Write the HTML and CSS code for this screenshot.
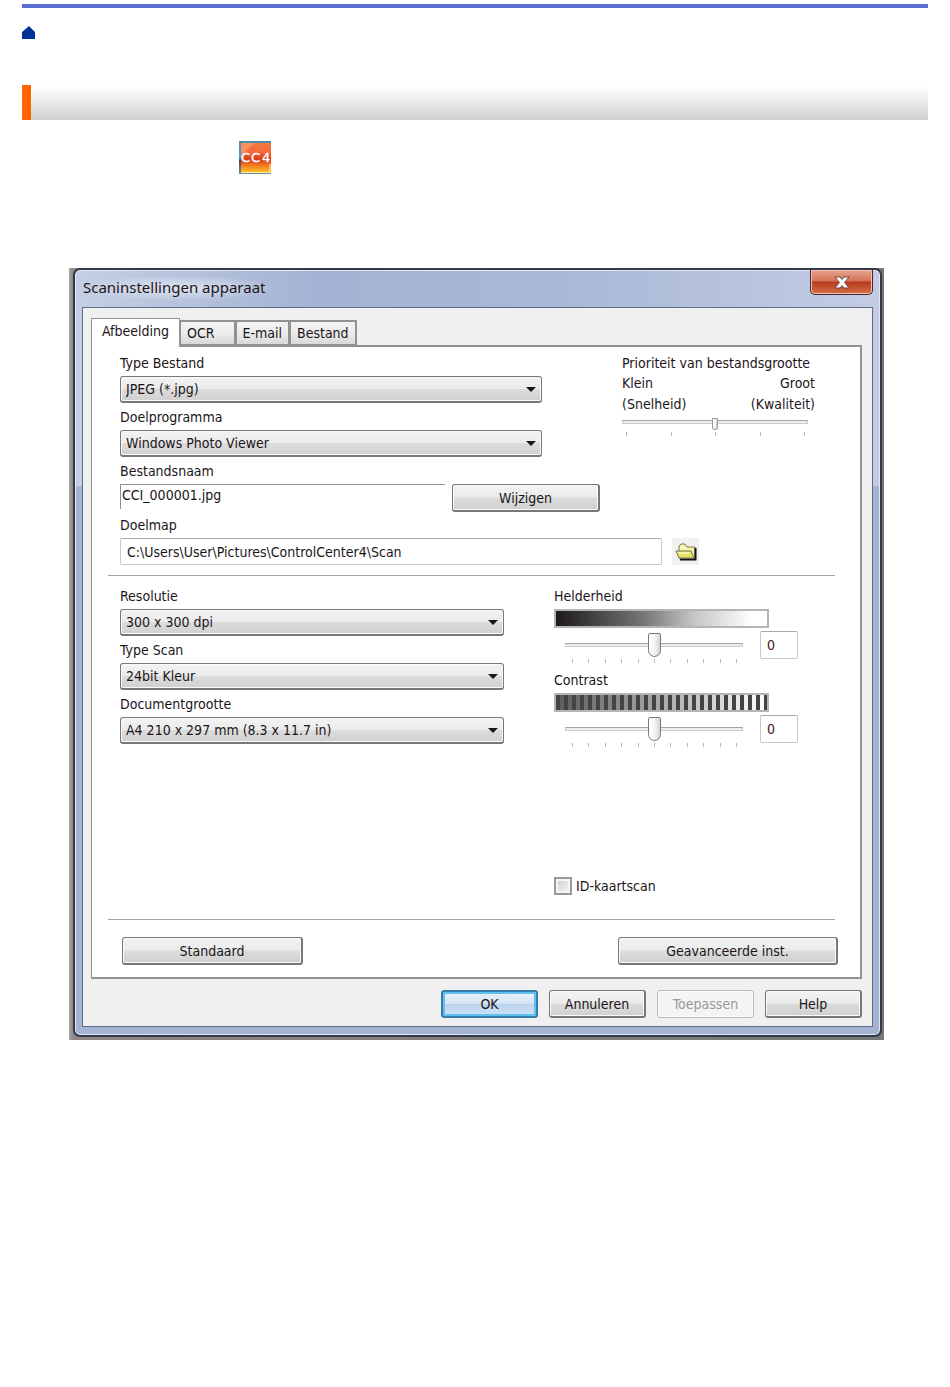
FILE: index.html
```html
<!DOCTYPE html>
<html lang="nl">
<head>
<meta charset="utf-8">
<title>Scaninstellingen apparaat</title>
<link rel="stylesheet" href="styles.css">
</head>
<body>
<header class="page-head">
  <a class="home" href="#" aria-label="Home"><svg width="13" height="13" viewBox="0 0 13 13"><path d="M0 13V6L6 1L7 0L13 6V13Z" fill="#003399"/></svg></a>
  <div class="heading-bar"></div>
</header>
<main>
  <svg class="cc4" width="32" height="33" viewBox="0 0 32 33" role="img" aria-label="CC4">
    <defs>
      <linearGradient id="fire" x1="0" y1="0" x2="0" y2="1"><stop offset="0" stop-color="#f07843"/><stop offset=".3" stop-color="#f8693c"/><stop offset=".55" stop-color="#d8371c"/><stop offset=".75" stop-color="#f47a20"/><stop offset="1" stop-color="#ffc928"/></linearGradient>
      <linearGradient id="edge" x1="0" y1="0" x2="0" y2="1"><stop offset="0" stop-color="#5288a2"/><stop offset=".5" stop-color="#38a5d8"/><stop offset=".6" stop-color="#52424a"/><stop offset="1" stop-color="#5e9ab0"/></linearGradient>
    </defs>
    <rect width="32" height="33" fill="url(#edge)"/>
    <rect x="2" y="2" width="30" height="30" fill="url(#fire)"/>
    <path d="M2 2H16Q6 9 2 18Z" fill="#ffa477" opacity=".6"/>
    <path d="M2 31.500H31V23" fill="none" stroke="#ffe7a0"/>
    <text x="2" y="21" class="cc4-text">C</text><text x="12" y="21" class="cc4-text">C</text><text x="23" y="21" class="cc4-text">4</text>
  </svg>

  <section class="frame" aria-labelledby="dlg-title">
    <div class="window">
      <div class="titlebar">
        <h1 id="dlg-title">Scaninstellingen apparaat</h1>
        <button class="close" type="button" aria-label="Sluiten"><svg width="16" height="13" viewBox="0 0 16 13"><path d="M1 1H6L8 3.500L10 1H15L10.500 6.500L15 12H10L8 9.500L6 12H1L5.500 6.500Z" fill="#fff" stroke="#6b4a4a"/></svg></button>
      </div>
      <form class="client">
        <div class="tabs" role="tablist">
          <button class="tab active" type="button" role="tab" aria-selected="true">Afbeelding</button>
          <button class="tab ocr" type="button" role="tab">OCR</button>
          <button class="tab" type="button" role="tab">E-mail</button>
          <button class="tab" type="button" role="tab">Bestand</button>
        </div>
        <div class="sheet">
          <div class="output">
            <div class="upper">
              <div class="stack wide">
                <div class="field"><label for="type">Type Bestand</label><div class="combo"><select id="type"><option>JPEG (*.jpg)</option></select></div></div>
                <div class="field"><label for="prog">Doelprogramma</label><div class="combo"><select id="prog"><option>Windows Photo Viewer</option></select></div></div>
              </div>
              <div class="priority">
                <label for="prio">Prioriteit van bestandsgrootte</label>
                <div class="ends"><span>Klein</span><span>Groot</span></div>
                <div class="ends"><span>(Snelheid)</span><span>(Kwaliteit)</span></div>
                <input class="range small" id="prio" type="range" min="0" max="4" value="2">
                <div class="ticks"><i></i><i></i><i></i><i></i><i></i></div>
              </div>
            </div>
            <div class="field name-field"><label for="name">Bestandsnaam</label>
              <div class="name-row"><input id="name" class="flat" type="text" value="CCI_000001.jpg" readonly><button class="btn" type="button">Wijzigen</button></div>
            </div>
            <div class="field"><label for="map">Doelmap</label>
              <div class="map-row"><input id="map" class="box" type="text" value="C:\Users\User\Pictures\ControlCenter4\Scan">
                <button class="browse" type="button" aria-label="Bladeren"><svg width="22" height="18" viewBox="0 0 22 18"><path d="M4 15V3L6 1H10L12 4H20V16H5Z" fill="#f4f3a0" stroke="#77776a"/><path d="M20.500 5V16.500H5" fill="none" stroke="#111" stroke-width="2"/><path d="M1 8H16L19 15H4Z" fill="#e6e45a" stroke="#77776a"/><path d="M5 5H11M3 10H15" stroke="#fff"/></svg></button></div>
            </div>
          </div>
          <hr>
          <div class="scan">
            <div class="stack">
              <div class="field"><label for="res">Resolutie</label><div class="combo"><select id="res"><option>300 x 300 dpi</option></select></div></div>
              <div class="field"><label for="scan">Type Scan</label><div class="combo"><select id="scan"><option>24bit Kleur</option></select></div></div>
              <div class="field"><label for="size">Documentgrootte</label><div class="combo"><select id="size"><option>A4 210 x 297 mm (8.3 x 11.7 in)</option></select></div></div>
            </div>
            <div class="adjust">
              <div class="level">
                <label for="bright">Helderheid</label>
                <div class="swatch brightness"></div>
                <div class="level-row"><div class="slider"><input class="range" id="bright" type="range" min="-50" max="50" value="0"><div class="ticks"><i></i><i></i><i></i><i></i><i></i><i></i><i></i><i></i><i></i><i></i><i></i></div></div><input class="box number" type="text" value="0" aria-label="Helderheid waarde"></div>
              </div>
              <div class="level">
                <label for="contrast">Contrast</label>
                <div class="swatch stripes"></div>
                <div class="level-row"><div class="slider"><input class="range" id="contrast" type="range" min="-50" max="50" value="0"><div class="ticks"><i></i><i></i><i></i><i></i><i></i><i></i><i></i><i></i><i></i><i></i><i></i></div></div><input class="box number" type="text" value="0" aria-label="Contrast waarde"></div>
              </div>
              <label class="check"><input type="checkbox">ID-kaartscan</label>
            </div>
          </div>
          <hr>
          <div class="sheet-actions"><button class="btn std" type="button">Standaard</button><button class="btn adv" type="button">Geavanceerde inst.</button></div>
        </div>
        <div class="actions">
          <button class="btn default" type="button">OK</button><button class="btn" type="button">Annuleren</button><button class="btn" type="button" disabled>Toepassen</button><button class="btn" type="button">Help</button>
        </div>
      </form>
    </div>
  </section>
</main>
</body>
</html>
```
FILE: styles.css
```css
* { box-sizing: border-box; }
body { margin: 0; background: #fff; color: #1c1518; font: 14px/20px "DejaVu Sans Condensed", "Noto Sans", sans-serif; }
button, input, select { font: inherit; color: inherit; margin: 0; }
.page-head { margin: 4px 22px 0; border-top: 4px solid #5a6fd6; padding-top: 18px; }
.home { display: block; height: 13px; }
.home svg { display: block; }
.heading-bar { height: 35px; margin-top: 46px; border-left: 9px solid #ff6600; background: linear-gradient(#fff, #f0f0f0 35%, #cfcfcf); }
main { padding: 21px 66px 0 69px; }
.cc4 { display: block; margin-left: 170px; }
.cc4-text { font: 13px "DejaVu Sans", sans-serif; fill: #fff; stroke: #fff; stroke-width: .4px; }

.frame { margin-top: 94px; padding: 0 2px 3px 4px; background: linear-gradient(90deg, #aaa, #8b8785 4px, #777); }
.window { border: 2px solid #343a48; border-radius: 7px; padding: 0 7px 8px; background: linear-gradient(90deg, #c5cfe4, #a3b3d3 30%, #a9b8d6 60%, #c3cce4) top / 100% 216px no-repeat, #a5b4d3; box-shadow: inset 0 0 0 1px #dfe7f5; }
.titlebar { display: flex; justify-content: space-between; align-items: flex-start; height: 37px; }
.titlebar h1 { margin: 5px 0 0; padding: 1px 12px 3px 1px; border-radius: 12px; background: radial-gradient(closest-side, #e8edf6cc, #e8edf600); font: 15px/22px "Noto Sans", sans-serif; }
.close { display: flex; align-items: center; justify-content: center; width: 63px; height: 25px; padding: 0; border: 1px solid #4a2530; border-top: 0; border-radius: 0 0 5px 5px; background: linear-gradient(#e5a58f, #d57258 45%, #b83a1c 50%, #d46f46); box-shadow: inset 0 0 0 1px #f3c4b5; }
.client { padding: 10px 10px 8px 8px; border: 1px solid #5f6d8b; background: #f0f0f0; }

.tabs { display: flex; align-items: flex-end; height: 27px; }
.tab { height: 25px; padding: 0 6px; border: 2px solid #929292; border-left-width: 1px; border-bottom-width: 1px; background: linear-gradient(#f3f3f3, #ececec 50%, #d9d9d9); white-space: nowrap; }
.tab.ocr { padding-right: 19px; }
.tab.active { position: relative; height: 29px; margin-bottom: -2px; padding: 0 10px 4px; border-width: 1px 1px 0; background: #fff; }
.sheet { padding: 6px 25px 12px 16px; border: 2px solid #929292; border-left-width: 1px; background: #fff; }
label { display: block; height: 20px; white-space: nowrap; }
.output { padding-left: 12px; }
.upper { display: flex; gap: 10%; justify-content: space-between; }
.stack { display: flex; flex-direction: column; gap: 4px; }
.wide { flex: 0 1 422px; }
.field { display: flex; flex-direction: column; gap: 3px; }
.name-field { margin: 4px 0 3px; }
.combo { position: relative; }
.combo::after { content: ""; position: absolute; right: 6px; top: 11px; border: 5px solid transparent; border-top-color: #181818; border-bottom: 0; pointer-events: none; }
.combo select, .btn { height: 27px; border: 1px solid #777; border-radius: 3px; background: linear-gradient(#f3f3f3, #ebebeb 48%, #dcdcdc 52%, #d0d0d0); box-shadow: inset 0 0 0 1px #fafafa; }
.combo select { display: block; width: 100%; padding: 0 24px 0 5px; appearance: none; border-bottom-width: 2px; }
.btn { width: 97px; height: 28px; padding: 0; border-width: 1px 2px 2px 1px; flex: none; text-align: center; }
.priority { flex: 0 0 193px; margin-right: 20px; }
.ends { display: flex; justify-content: space-between; height: 21px; }
.priority .range { width: 186px; }
.priority .ticks { width: 186px; padding: 4px 3px 0 4px; }
.name-row { display: flex; gap: 7px; }
.flat { flex: 0 1 325px; min-width: 0; height: 25px; padding: 0 0 4px 1px; border: solid #909090; border-width: 1px 0 0 1px; background: #fff; }
.name-row .btn { width: 148px; }
.map-row { display: flex; gap: 10px; }
.box { flex: 0 1 542px; min-width: 0; height: 27px; padding: 0 6px; border: 1px solid #c9c9c9; border-top-color: #aaa; border-radius: 2px; background: #fff; }
.browse { display: flex; align-items: center; justify-content: center; width: 27px; height: 27px; padding: 0; border: 0; background: #f1f1f1; }
hr { height: 1px; margin: 10px 0; border: 0; background: #a2a2a2; }

.scan { display: flex; gap: 50px; min-height: 323px; padding-left: 12px; }
.scan .stack { flex: 0 1 384px; }
.adjust { flex: 1 0 244px; display: flex; flex-direction: column; }
.level { height: 84px; }
.swatch { width: 215px; height: 19px; margin-top: 3px; border: 2px solid #b5b5b5; }
.brightness { background: linear-gradient(90deg, #1d191a, #777 42%, #c4c4c4 65%, #fff 93%); }
.stripes { background: repeating-linear-gradient(90deg, #444 0 4px, transparent 4px 8px), linear-gradient(90deg, #5b5b5b, #aaa 50%, #fff); }
.level-row { display: flex; gap: 17px; padding-left: 11px; margin-top: 3px; }
.slider { width: 178px; padding-top: 2px; }
.number { flex: 0 0 38px; height: 28px; color: #4a1712; }
.range { display: block; width: 100%; height: 24px; appearance: none; background: none; }
.range::-webkit-slider-runnable-track { height: 4px; border: 1px solid #ccc; border-top-color: #a2a2a2; background: #eee; }
.range::-webkit-slider-thumb { appearance: none; width: 13px; height: 24px; margin-top: -11px; border: 1px solid #777; border-radius: 2px 2px 7px 7px; background: linear-gradient(90deg, #fff, #f4f4f4 50%, #d5d5d5); }
.small { height: 13px; }
.small::-webkit-slider-thumb { width: 6px; height: 12px; margin-top: -3px; border-radius: 1px 1px 4px 4px; border-color: #999; }
.ticks { display: flex; justify-content: space-between; padding: 2px 6px 0 7px; }
.ticks i { width: 1px; height: 4px; background: #b9b9b9; }
.check { display: flex; align-items: center; gap: 4px; margin: auto 0 13px; }
.check input { appearance: none; width: 18px; height: 18px; border: 2px solid #999; background: linear-gradient(135deg, #ccc, #f6f6f6); box-shadow: inset 0 0 0 2px #f5f5f5; }
.sheet-actions { display: flex; justify-content: space-between; margin: 17px -3px 0 14px; }
.std { width: 181px; }
.adv { width: 220px; }
.actions { display: flex; justify-content: flex-end; gap: 11px; margin: 11px 0 0; }
.default { border: 2px solid #377cab; background: linear-gradient(#e8f1fa, #d5e4f4 48%, #bdd3ec 52%, #cce5fa); box-shadow: inset 0 0 0 2px #62c0ef; }
.btn:disabled { color: #999; border: 1px solid #bbb; background: #f4f4f4; }
```
